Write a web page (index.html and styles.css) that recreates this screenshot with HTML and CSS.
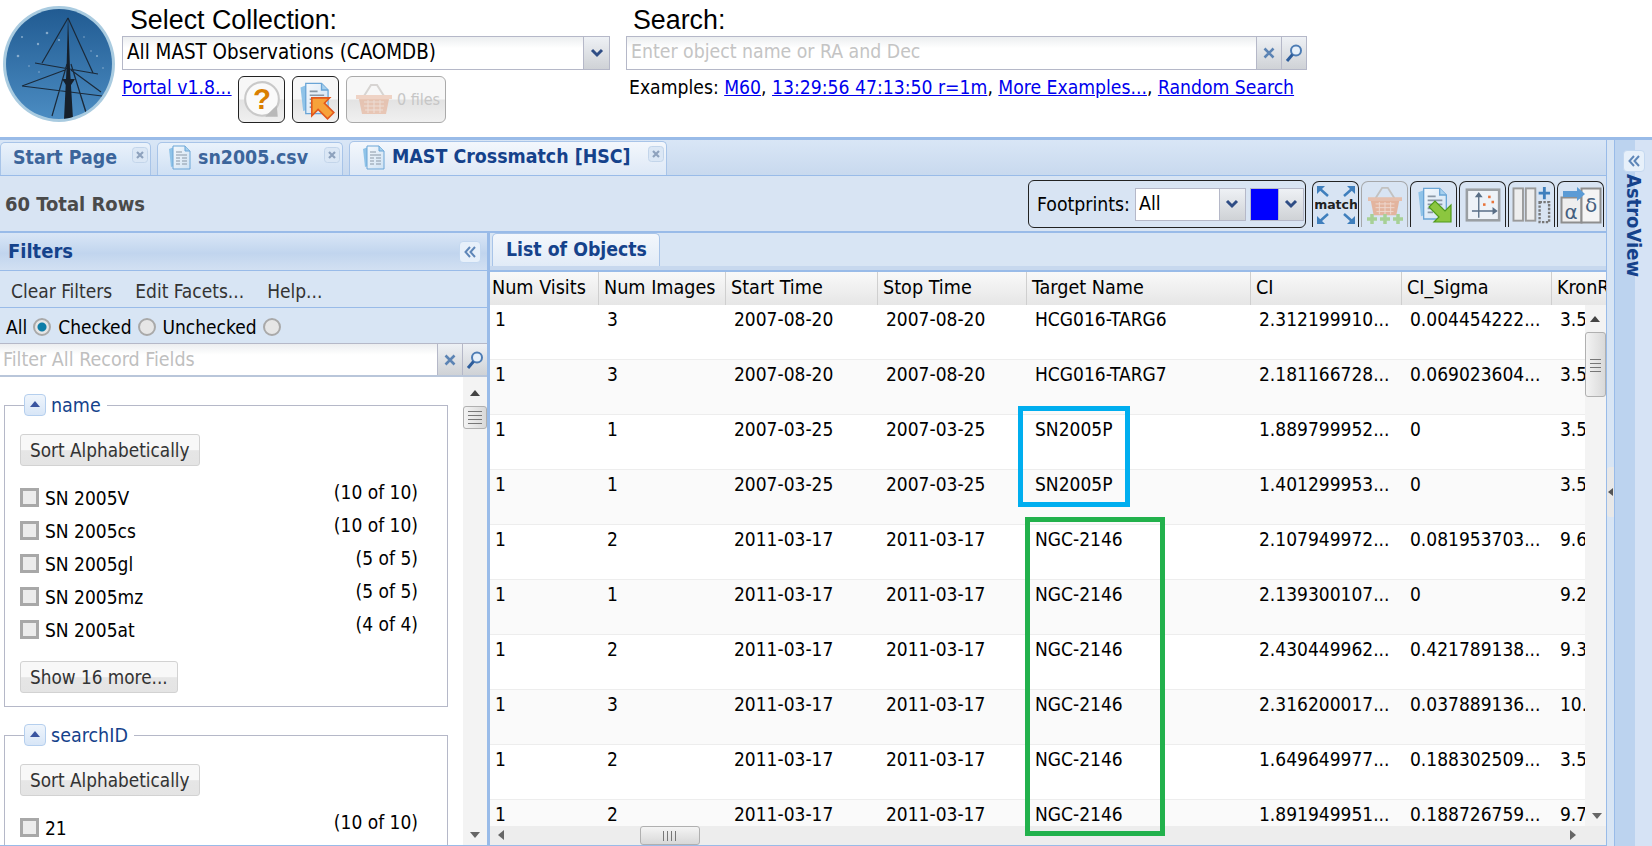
FILE: index.html
```html
<!DOCTYPE html>
<html lang="en">
<head>
<meta charset="utf-8">
<title>MAST Portal</title>
<link rel="stylesheet" href="styles.css">
</head>
<body>
<svg class="defs" width="0" height="0" aria-hidden="true">
  <defs>
    <linearGradient id="doc" x1="0" y1="0" x2="1" y2="1"><stop offset="0" stop-color="#f4f8fc"/><stop offset="1" stop-color="#cfe2f3"/></linearGradient>
    <symbol id="i-doc" viewBox="0 0 24 26">
      <path d="M1 5l5-2v19l-3 1z" fill="#8fc3e8"/>
      <path d="M5 2h12l5 5v18H5z" fill="url(#doc)" stroke="#6aa5d6"/>
      <path d="M17 2v5h5" fill="#a6d0ee" stroke="#6aa5d6"/>
      <path d="M8 8h6M8 11h11M8 14h4M14 14h5M8 17h4M14 17h5M8 20h4M14 20h5" stroke="#8a98a6" stroke-width="1.2"/>
    </symbol>
    <symbol id="i-x" viewBox="0 0 16 16">
      <rect x=".5" y=".5" width="15" height="15" rx="3" fill="#dbe7f5" stroke="#c3d5ea"/>
      <path d="M5 5l6 6M11 5l-6 6" stroke="#8ea2bd" stroke-width="2.2"/>
    </symbol>
    <symbol id="i-chev" viewBox="0 0 14 10"><path d="M2 2l5 5 5-5" fill="none" stroke="#2f4d85" stroke-width="3"/></symbol>
    <symbol id="i-clear" viewBox="0 0 14 14"><path d="M2.500 2.500l9 9M11.500 2.500l-9 9" stroke="#5c84b4" stroke-width="2.600"/></symbol>
    <symbol id="i-find" viewBox="0 0 18 20"><circle cx="11" cy="7.500" r="5" fill="#e6f0fa" stroke="#4d7cb4" stroke-width="2"/><path d="M7.500 11.500L2 18" stroke="#2d5d9b" stroke-width="3"/></symbol>
    <symbol id="i-dbl" viewBox="0 0 14 14"><path d="M7 2L2.500 7 7 12M12 2L7.500 7l4.500 5" fill="none" stroke="#5e86b8" stroke-width="2"/></symbol>
    <symbol id="i-basket" viewBox="0 0 40 36">
      <path d="M10 14L17 3h6l7 11" fill="none" stroke="#bdb9b4" stroke-width="2"/>
      <path d="M2 13h36v4H2z" fill="#e9b79d"/>
      <path d="M5 17h30l-3 15H8z" fill="#e6a98a"/>
      <path d="M10 20h20M10 24h20M11 28h18M14 18v13M20 18v13M26 18v13" stroke="#f4d7c8"/>
    </symbol>
  </defs>
</svg>

<header class="top">
  <svg class="logo" viewBox="0 0 116 120" role="img" aria-label="MAST logo">
    <defs>
      <linearGradient id="sky" x1="0" y1="0" x2="0" y2="1"><stop offset="0" stop-color="#215b92"/><stop offset="1" stop-color="#4b8cc2"/></linearGradient>
      <clipPath id="disc"><ellipse cx="58" cy="60" rx="53" ry="55"/></clipPath>
    </defs>
    <ellipse cx="58" cy="60" rx="56" ry="58" fill="#a9cbe0"/>
    <ellipse cx="58" cy="60" rx="53" ry="55" fill="url(#sky)"/>
    <g fill="#cfe0ef" opacity=".55">
      <circle cx="46" cy="29" r="1.300"/><circle cx="21" cy="33" r="1"/><circle cx="37" cy="40" r="1.200"/><circle cx="17" cy="52" r="1.300"/><circle cx="58" cy="36" r="1"/><circle cx="83" cy="33" r=".8"/><circle cx="96" cy="52" r="1"/><circle cx="28" cy="62" r=".8"/><circle cx="102" cy="64" r=".8"/><circle cx="90" cy="47" r=".8"/><circle cx="38" cy="68" r=".8"/>
    </g>
    <g clip-path="url(#disc)" fill="none" stroke="#1b2a3a">
      <path d="M67 14L41 59M67 14L92 69M66 60L51 112M70 60L86 112M34 59L97 70M21 82L64 66M21 82L101 92M70 66L100 88M73 70L85 108" stroke-width="1.200"/>
      <path d="M67 12l-1.500 53-2.500 50h9l-3-50z" fill="#16202b" stroke="none"/>
      <path d="M61 75h13l-4 6h-5z" fill="#16202b" stroke="none"/>
    </g>
  </svg>
  <div class="collection">
    <div class="big-label">Select Collection:</div>
    <div class="combo">
      <span class="combo-text">All MAST Observations (CAOMDB)</span>
      <span class="trigger"><svg width="14" height="10"><use href="#i-chev"/></svg></span>
    </div>
    <div class="portal-row">
      <a class="link portal-link" href="#">Portal v1.8...</a>
      <button class="tool" aria-label="Help">
        <svg width="40" height="40" viewBox="0 0 38 38"><circle cx="19" cy="18" r="16" fill="#fafafa" stroke="#c9c9c9" stroke-width="2"/><path d="M33 24l1 11H22z" fill="#b9b9b9"/><text x="19" y="28" class="qmark">?</text></svg>
      </button>
      <button class="tool" aria-label="Load">
        <svg width="40" height="42" viewBox="0 0 38 40"><use href="#i-doc" width="30" height="34" x="3" y="1"/><path d="M15 18H32L27 23L36 32L30 38L21 29L15 35Z" fill="#f7a23a" stroke="#e2571c" stroke-width="1.500"/></svg>
      </button>
      <button class="tool basket-tool" aria-label="Basket">
        <svg class="faded" width="40" height="36"><use href="#i-basket"/></svg>
        <span>0 files</span>
      </button>
    </div>
  </div>
  <div class="search">
    <div class="big-label search-label">Search:</div>
    <div class="combo search-box">
      <span class="combo-text placeholder">Enter object name or RA and Dec</span>
      <span class="trigger small"><svg width="14" height="14"><use href="#i-clear"/></svg></span>
      <span class="trigger small"><svg width="18" height="20"><use href="#i-find"/></svg></span>
    </div>
    <div class="examples">Examples: <a class="link" href="#">M60</a>, <a class="link" href="#">13:29:56 47:13:50 r=1m</a>, <a class="link" href="#">More Examples...</a>, <a class="link" href="#">Random Search</a></div>
  </div>
</header>

<div class="workspace">
  <main class="main">
    <nav class="tabs">
      <div class="tab tab-start"><span class="tab-label">Start Page</span><svg class="tab-x" width="16" height="16"><use href="#i-x"/></svg></div>
      <div class="tab tab-file"><svg class="tab-doc" width="24" height="26"><use href="#i-doc"/></svg><span class="tab-label">sn2005.csv</span><svg class="tab-x" width="16" height="16"><use href="#i-x"/></svg></div>
      <div class="tab tab-cross active"><svg class="tab-doc" width="24" height="26"><use href="#i-doc"/></svg><span class="tab-label">MAST Crossmatch [HSC]</span><svg class="tab-x" width="16" height="16"><use href="#i-x"/></svg></div>
    </nav>
    <div class="toolbar">
      <div class="total">60 Total Rows</div>
      <div class="footprints">
        <span>Footprints:</span>
        <div class="mini-combo fp-all"><span class="fp-text">All</span><span class="trigger"><svg width="14" height="10"><use href="#i-chev"/></svg></span></div>
        <div class="mini-combo fp-color"><span class="swatch"></span><span class="trigger"><svg width="14" height="10"><use href="#i-chev"/></svg></span></div>
      </div>
      <div class="actions">
        <button class="act" aria-label="Match"><svg width="42" height="42" viewBox="0 0 42 42"><g fill="none" stroke="#3f7fbd" stroke-width="2.500"><path d="M4 4l9 8M38 4l-9 8M4 38l9-8M38 38l-9-8"/></g><g fill="#3f7fbd"><path d="M2 2h8L2 10zM40 2h-8l8 8zM2 40h8l-8-8zM40 40h-8l8-8z"/></g><text x="21" y="25" class="match">match</text></svg></button>
        <button class="act" aria-label="Add to basket"><svg width="42" height="40" viewBox="0 0 42 40"><use href="#i-basket" width="38" height="34" x="2" y="0"/><path d="M3 34h10M8 29v10M16 34h10M21 29v10M29 34h10M34 29v10" stroke="#9ccc7f" stroke-width="3.500"/></svg></button>
        <button class="act" aria-label="Export"><svg width="42" height="42" viewBox="0 0 42 42"><use href="#i-doc" width="32" height="36" x="4" y="1"/><path d="M38 38H21L26 33L16 23L22 17L32 27L38 21Z" fill="#8cc63f" stroke="#4f9a1a" stroke-width="1.200"/></svg></button>
        <button class="act" aria-label="Chart"><svg width="36" height="34" viewBox="0 0 42 40"><rect x="2" y="2" width="38" height="36" fill="#eef3f8" stroke="#9a9fa3" stroke-width="3"/><path d="M16 35V6M8 27h29M16 6l-3 4h6zM37 27l-4-3v6z" stroke="#5a6f86" stroke-width="1.600" fill="#5a6f86"/><g fill="#e8743b"><rect x="27" y="9" width="3" height="3"/><rect x="21" y="18" width="3" height="3"/><rect x="31" y="15" width="3" height="3"/></g></svg></button>
        <button class="act" aria-label="Columns"><svg width="40" height="38" viewBox="0 0 42 40"><rect x="1.500" y="2.500" width="10" height="34" fill="#eee" stroke="#9a9a9a" stroke-width="2"/><rect x="14.500" y="2.500" width="10" height="34" fill="#eee" stroke="#9a9a9a" stroke-width="2"/><path d="M34 1v13M28 7.500h12" stroke="#3f7fbd" stroke-width="3"/><rect x="29" y="17" width="10" height="21" fill="none" stroke="#777" stroke-width="2.500" stroke-dasharray="2.500 1.500"/></svg></button>
        <button class="act" aria-label="Column names"><svg width="42" height="40" viewBox="0 0 42 40"><rect x="1.500" y="12.500" width="20" height="25" fill="#eee" stroke="#8e8e8e" stroke-width="2"/><rect x="21.500" y="3.500" width="19" height="34" fill="#f4f4f4" stroke="#8e8e8e" stroke-width="2"/><path d="M3 6h14V2l8 7-8 7v-4H3z" fill="#5b9bd5"/><text x="11" y="34" class="greek">α</text><text x="31" y="27" class="greek">δ</text></svg></button>
      </div>
    </div>

    <div class="split">
      <aside class="filters">
        <div class="filters-head">
          <span class="filters-title">Filters</span>
          <span class="dbl-btn"><svg width="14" height="14"><use href="#i-dbl"/></svg></span>
        </div>
        <div class="filters-menu"><span>Clear Filters</span><span>Edit Facets...</span><span>Help...</span></div>
        <div class="filters-radio">
          <span>All</span><i class="radio on"></i>
          <span>Checked</span><i class="radio"></i>
          <span>Unchecked</span><i class="radio"></i>
        </div>
        <div class="filters-input">
          <span class="placeholder">Filter All Record Fields</span>
          <span class="trigger small"><svg width="14" height="14"><use href="#i-clear"/></svg></span>
          <span class="trigger small"><svg width="18" height="20"><use href="#i-find"/></svg></span>
        </div>
        <div class="facet-wrap">
          <div class="facets">
            <fieldset class="facet">
              <legend><i class="toggle"></i><span>name</span></legend>
              <button class="btn">Sort Alphabetically</button>
              <ul class="facet-list">
                <li><i class="check"></i><span class="fname">SN 2005V</span><span class="fcount">(10 of 10)</span></li>
                <li><i class="check"></i><span class="fname">SN 2005cs</span><span class="fcount">(10 of 10)</span></li>
                <li><i class="check"></i><span class="fname">SN 2005gl</span><span class="fcount">(5 of 5)</span></li>
                <li><i class="check"></i><span class="fname">SN 2005mz</span><span class="fcount">(5 of 5)</span></li>
                <li><i class="check"></i><span class="fname">SN 2005at</span><span class="fcount">(4 of 4)</span></li>
              </ul>
              <button class="btn more">Show 16 more...</button>
            </fieldset>
            <fieldset class="facet">
              <legend><i class="toggle"></i><span>searchID</span></legend>
              <button class="btn">Sort Alphabetically</button>
              <ul class="facet-list">
                <li><i class="check"></i><span class="fname">21</span><span class="fcount">(10 of 10)</span></li>
              </ul>
            </fieldset>
          </div>
          <div class="vscroll facet-scroll">
            <i class="arrow up"></i><b class="thumb"></b><i class="arrow down"></i>
          </div>
        </div>
      </aside>

      <section class="results">
        <div class="res-tabs"><div class="res-tab">List of Objects</div></div>
        <div class="grid">
          <div class="row head">
            <span>Num Visits</span><span>Num Images</span><span>Start Time</span><span>Stop Time</span><span>Target Name</span><span>CI</span><span>CI_Sigma</span><span>KronR</span>
          </div>
          <div class="grid-body">
            <div class="rows">
              <div class="row"><span>1</span><span>3</span><span>2007-08-20</span><span>2007-08-20</span><span>HCG016-TARG6</span><span>2.312199910...</span><span>0.004454222...</span><span>3.5</span></div>
              <div class="row"><span>1</span><span>3</span><span>2007-08-20</span><span>2007-08-20</span><span>HCG016-TARG7</span><span>2.181166728...</span><span>0.069023604...</span><span>3.5</span></div>
              <div class="row"><span>1</span><span>1</span><span>2007-03-25</span><span>2007-03-25</span><span>SN2005P</span><span>1.889799952...</span><span>0</span><span>3.5</span></div>
              <div class="row"><span>1</span><span>1</span><span>2007-03-25</span><span>2007-03-25</span><span>SN2005P</span><span>1.401299953...</span><span>0</span><span>3.5</span></div>
              <div class="row"><span>1</span><span>2</span><span>2011-03-17</span><span>2011-03-17</span><span>NGC-2146</span><span>2.107949972...</span><span>0.081953703...</span><span>9.6</span></div>
              <div class="row"><span>1</span><span>1</span><span>2011-03-17</span><span>2011-03-17</span><span>NGC-2146</span><span>2.139300107...</span><span>0</span><span>9.2</span></div>
              <div class="row"><span>1</span><span>2</span><span>2011-03-17</span><span>2011-03-17</span><span>NGC-2146</span><span>2.430449962...</span><span>0.421789138...</span><span>9.3</span></div>
              <div class="row"><span>1</span><span>3</span><span>2011-03-17</span><span>2011-03-17</span><span>NGC-2146</span><span>2.316200017...</span><span>0.037889136...</span><span>10.</span></div>
              <div class="row"><span>1</span><span>2</span><span>2011-03-17</span><span>2011-03-17</span><span>NGC-2146</span><span>1.649649977...</span><span>0.188302509...</span><span>3.5</span></div>
              <div class="row"><span>1</span><span>2</span><span>2011-03-17</span><span>2011-03-17</span><span>NGC-2146</span><span>1.891949951...</span><span>0.188726759...</span><span>9.7</span></div>
            </div>
            <div class="vscroll grid-scroll">
              <i class="arrow up"></i><b class="thumb"></b><i class="arrow down"></i>
            </div>
          </div>
          <div class="hscroll">
            <i class="arrow left"></i><b class="hthumb"></b><i class="arrow right"></i>
          </div>
        </div>
      </section>
    </div>
    <div class="mark mark-blue"></div>
    <div class="mark mark-green"></div>
  </main>
  <div class="side-split"><i class="mini"></i></div>
  <aside class="astro">
    <span class="dbl-btn"><svg width="14" height="14"><use href="#i-dbl"/></svg></span>
    <span class="astro-title">AstroView</span>
  </aside>
</div>
</body>
</html>
```
FILE: styles.css
```css
* { box-sizing: border-box; }
html, body { margin: 0; height: 846px; overflow: hidden; background: #fff; }
body {
  display: flex;
  flex-direction: column;
  font-family: "DejaVu Sans", "Noto Sans", sans-serif;
  font-stretch: condensed;
  font-size: 18px;
  color: #000;
}
.defs { position: absolute; }
button { font: inherit; font-stretch: inherit; margin: 0; padding: 0; }
a.link { color: #0000ee; text-decoration: underline; }

/* header */
.top { height: 137px; flex: none; display: flex; padding: 4px 0 0 1px; }
.logo { width: 116px; height: 120px; flex: none; }
.collection { width: 488px; margin-left: 5px; flex: none; }
.big-label {
  font-family: "Liberation Sans", sans-serif;
  font-stretch: normal;
  font-size: 26.800px;
  line-height: 32px;
  padding-left: 8px;
}
.combo {
  height: 34px;
  display: flex;
  border: 1px solid #b5b8c8;
  background: linear-gradient(#eceef0, #fff 35%);
}
.combo-text { flex: 1; font-size: 20.400px; line-height: 30px; padding-left: 4px; white-space: nowrap; overflow: hidden; }
.trigger {
  width: 26px;
  flex: none;
  display: flex;
  align-items: center;
  justify-content: center;
  background: linear-gradient(#eef1f5, #cfd2d6);
  border-left: 1px solid #b5b8c8;
}
.trigger.small { width: 25px; }
.portal-row { display: flex; align-items: flex-start; margin-top: 6px; }
.portal-link { font-size: 19.300px; line-height: 24px; width: 116px; margin-top: 0; }
.tool {
  width: 47px;
  height: 47px;
  margin-right: 7px;
  display: flex;
  align-items: center;
  justify-content: center;
  border: 1px solid #222;
  border-radius: 6px;
  background: linear-gradient(#f7f7f7 48%, #e3e3e3 52%, #f0f0f0);
}
.basket-tool { width: 100px; gap: 3px; border-color: #aaa; color: #c6c6c6; font-size: 16px; padding-left: 2px; }
.faded { opacity: .55; }
.search { width: 681px; margin-left: 16px; flex: none; }
.search-label { padding-left: 7px; }
.placeholder { color: #bfbfbf; }
.search-box .combo-text { color: #c4c4c4; font-size: 19.300px; }
.examples { font-size: 19.200px; line-height: 24px; margin-top: 6px; padding-left: 3px; white-space: nowrap; }

/* workspace */
.workspace { flex: 1; display: flex; border-top: 3px solid #99bbe8; min-height: 0; }
.main { width: 1606px; flex: none; display: flex; flex-direction: column; position: relative; }
.tabs {
  height: 36px;
  flex: none;
  display: flex;
  align-items: flex-end;
  background: linear-gradient(#d9e6f6, #c8d9ee);
  border-bottom: 1px solid #99bbe8;
}
.tab {
  height: 33px;
  display: flex;
  align-items: center;
  margin-right: 6px;
  padding-bottom: 4px;
  border: 1px solid #a8c4e8;
  border-bottom: 0;
  border-radius: 5px 5px 0 0;
  background: linear-gradient(#eaf2fb, #cfe0f4);
  font-weight: 700;
  font-size: 19.400px;
  color: #3c659b;
  position: relative;
}
.tab.active { background: linear-gradient(#f3f7fc, #dde8f6); color: #15428b; height: 34px; }
.tab-start { width: 151px; padding-left: 12px; }
.tab-file { width: 186px; padding-left: 10px; }
.tab-cross { width: 318px; padding-left: 12px; }
.tab-doc { margin-right: 6px; flex: none; }
.tab-label { white-space: nowrap; }
.tab-x { position: absolute; right: 2px; top: 4px; }
.toolbar {
  height: 55px;
  flex: none;
  display: flex;
  align-items: flex-start;
  background: #d8e4f3;
  padding-left: 5px;
}
.total { font-weight: 700; font-size: 20px; color: #4a4a4a; line-height: 56px; width: 1023px; }
.footprints {
  width: 278px;
  height: 48px;
  margin-top: 4px;
  flex: none;
  display: flex;
  align-items: center;
  padding-left: 8px;
  border: 1px solid #222;
  border-radius: 6px;
  font-size: 19.300px;
}
.mini-combo { display: flex; height: 33px; border: 1px solid #b5b8c8; background: #fff; }
.fp-all { width: 111px; margin-left: 5px; flex: none; }
.fp-text { flex: 1; font-size: 19.500px; line-height: 30px; padding-left: 3px; }
.fp-color { width: 54px; margin-left: 4px; flex: none; }
.swatch { width: 27px; background: #00f; flex: none; }
.fp-color .trigger { flex: 1; }
.actions { display: flex; gap: 2px; margin: 5px 0 0 6px; flex: none; }
.act {
  width: 47px;
  height: 46px;
  display: flex;
  align-items: center;
  justify-content: center;
  background: transparent;
  border: 1px solid #222;
  border-bottom: 0;
  border-radius: 7px 7px 0 0;
}
.act:nth-child(2) { border-color: #999; opacity: .8; }
.qmark { font: 700 28px "Liberation Sans", sans-serif; fill: #d97f00; text-anchor: middle; }
.match { font: 700 12.500px "DejaVu Sans", sans-serif; text-anchor: middle; fill: #222; }
.greek { font: 20px "DejaVu Sans", sans-serif; text-anchor: middle; fill: #44607f; }

/* split */
.split { flex: 1; min-height: 0; display: flex; border-top: 2px solid #99bbe8; border-bottom: 1px solid #99bbe8; }
.filters {
  width: 490px;
  flex: none;
  display: flex;
  flex-direction: column;
  border-right: 3px solid #99bbe8;
  min-height: 0;
  background: #fff;
}
.filters-head {
  height: 38px;
  flex: none;
  display: flex;
  align-items: center;
  justify-content: space-between;
  padding: 0 6px 0 8px;
  background: linear-gradient(#d9e6f6, #c1d5ee 55%, #d2e0f2);
  border-bottom: 1px solid #99bbe8;
}
.filters-title { font-weight: 700; font-size: 20px; color: #15428b; margin-top: -2px; }
.dbl-btn {
  width: 22px;
  height: 22px;
  display: flex;
  align-items: center;
  justify-content: center;
  background: #e7f0fa;
  border: 1px solid #c4d8f0;
  border-radius: 4px;
}
.filters-menu {
  height: 37px;
  flex: none;
  display: flex;
  gap: 23px;
  align-items: center;
  padding: 3px 0 0 11px;
  font-size: 19px;
  color: #333;
  background: #d8e5f4;
  border-bottom: 1px solid #99bbe8;
}
.filters-radio {
  height: 36px;
  flex: none;
  display: flex;
  align-items: center;
  padding: 3px 0 0 6px;
  font-size: 19px;
  background: #d8e5f4;
  border-bottom: 1px solid #b5b8c8;
}
.radio {
  width: 18px;
  height: 18px;
  margin: 0 7px 0 6px;
  border: 2px solid #a9a9a9;
  border-radius: 50%;
  background: #e6e6e6;
  flex: none;
}
.radio.on { background: radial-gradient(circle, #0f7ea8 0 4px, #e6e6e6 5px); }
.filters-input {
  height: 33px;
  flex: none;
  display: flex;
  background: linear-gradient(#eceef0, #fff 35%);
  border-bottom: 2px solid #b9c6da;
  font-size: 19.500px;
}
.filters-input .placeholder { flex: 1; padding-left: 3px; line-height: 32px; white-space: nowrap; }
.facet-wrap { flex: 1; min-height: 0; display: flex; }
.facets { flex: 1; min-width: 0; overflow: hidden; padding: 0 15px 0 4px; }
.facet {
  margin: 17px 0 0;
  padding: 18px 15px 0 15px;
  height: 313px;
  border: 1px solid #b5b8c8;
  min-width: 0;
}
.facet + .facet { margin-top: 17px; height: 200px; }
.facet legend { display: flex; align-items: center; gap: 5px; padding: 0 6px 0 0; margin-left: 4px; height: 22px; color: #15428b; font-size: 19.500px; }
.toggle {
  width: 22px;
  height: 22px;
  border: 1px solid #b5cfee;
  border-radius: 4px;
  background: linear-gradient(#eff5fc, #d8e6f7);
  display: block;
  position: relative;
}
.toggle::after {
  content: "";
  position: absolute;
  left: 5px;
  top: 6px;
  border: 5px solid transparent;
  border-top: 0;
  border-bottom: 6px solid #3a55a0;
}
.btn {
  display: block;
  height: 32px;
  padding: 0 9px;
  background: linear-gradient(#f8f8f8 50%, #e6e6e6 52%, #e4e4e4);
  border: 1px solid #d2d2d2;
  border-radius: 3px;
  color: #333;
  font-size: 18.800px;
}
.facet-list { list-style: none; margin: 15px 0 0; padding: 0; }
.facet-list li { height: 33px; display: flex; align-items: center; }
.check {
  width: 19px;
  height: 19px;
  border: 3px solid #a8a8a8;
  background: #ececec;
  flex: none;
  margin-right: 6px;
}
.fname { flex: 1; font-size: 19px; }
.fcount { font-size: 19px; margin: -12px 14px 0 0; }
.more { margin-top: 15px; }

.vscroll { width: 24px; flex: none; background: #f3f3f3; position: relative; }
.arrow { position: absolute; width: 0; height: 0; border: 5px solid transparent; }
.arrow.up { top: 13px; left: 7px; border-top: 0; border-bottom: 6px solid #444; }
.arrow.down { bottom: 7px; left: 7px; border-bottom: 0; border-top: 6px solid #666; }
.thumb {
  position: absolute;
  left: 0;
  right: 0;
  top: 29px;
  height: 23px;
  background: linear-gradient(90deg, #f3f3f3, #d9d9d9);
  border: 1px solid #b0b0b0;
  border-radius: 3px;
}
.thumb::after {
  content: "";
  position: absolute;
  left: 4px;
  right: 4px;
  top: 4px;
  height: 13px;
  background: repeating-linear-gradient(#777 0 1px, transparent 1px 4px);
}

/* results */
.results { flex: 1; min-width: 0; display: flex; flex-direction: column; }
.res-tabs {
  height: 37px;
  flex: none;
  display: flex;
  align-items: flex-end;
  padding-left: 2px;
  background: #d8e5f4;
  border-bottom: 4px solid #c7d8ee;
}
.res-tab {
  width: 168px;
  height: 33px;
  padding-left: 13px;
  font-weight: 700;
  font-size: 19.300px;
  line-height: 31px;
  color: #15428b;
  background: linear-gradient(#f3f7fc, #e1ebf7);
  border: 1px solid #a8c4e8;
  border-bottom: 0;
  border-radius: 5px 5px 0 0;
}
.grid { flex: 1; min-height: 0; display: flex; flex-direction: column; border-top: 2px solid #99bbe8; }
.row {
  display: grid;
  grid-template-columns: 109px 127px 152px 149px 224px 151px 150px 54px;
  height: 55px;
  flex: none;
  border-bottom: 1px solid #ededed;
  overflow: hidden;
}
.row > span { padding: 2px 0 0 5px; white-space: nowrap; overflow: hidden; font-size: 19px; line-height: 24px; }
.row.head {
  height: 33px;
  background: linear-gradient(#f9f9f9, #e6e6e6);
  border-bottom: 0;
}
.row.head > span { padding: 4px 0 0 5px; border-right: 1px solid #cfcfcf; font-size: 19.600px; }
.row.head > span:first-child { padding-left: 2px; }
.row.head > span:last-child { border-right: 0; }
.grid-body { flex: 1; min-height: 0; display: flex; }
.rows { flex: 1; min-width: 0; overflow: hidden; }
.rows .row { width: 1116px; }
.rows .row > span { padding-left: 8px; }
.rows .row > span:first-child { padding-left: 5px; }
.rows .row:nth-child(even) { background: #fafafa; }
.grid-scroll { width: 21px; }
.grid-scroll .arrow.up { top: 11px; left: 5px; }
.grid-scroll .thumb { top: 27px; height: 65px; }
.grid-scroll .thumb::after { top: 26px; }
.hscroll { height: 19px; flex: none; background: #ededed; position: relative; }
.hthumb {
  position: absolute;
  left: 150px;
  top: 0;
  width: 60px;
  height: 19px;
  background: linear-gradient(#f4f4f4, #d8d8d8);
  border: 1px solid #b0b0b0;
  border-radius: 3px;
}
.hthumb::after {
  content: "";
  position: absolute;
  left: 22px;
  top: 4px;
  width: 13px;
  height: 10px;
  background: repeating-linear-gradient(90deg, #777 0 1px, transparent 1px 4px);
}
.arrow.left { left: 8px; top: 4px; border-left: 0; border-right: 6px solid #666; }
.arrow.right { right: 30px; top: 4px; border-right: 0; border-left: 6px solid #666; }

/* annotation boxes */
.mark { position: absolute; pointer-events: none; }
.mark-blue { left: 1018px; top: 266px; width: 112px; height: 101px; border: 5px solid #00aeef; }
.mark-green { left: 1025px; top: 377px; width: 140px; height: 319px; border: 5px solid #22b14c; }

/* right */
.side-split { width: 9px; flex: none; background: #d8e5f4; border-left: 1px solid #99bbe8; border-right: 1px solid #99bbe8; position: relative; }
.mini {
  position: absolute;
  left: 0;
  top: 327px;
  width: 7px;
  height: 50px;
  background: #e8e8e8;
  border-radius: 3px 0 0 3px;
}
.mini::after {
  content: "";
  position: absolute;
  left: 1px;
  top: 21px;
  border: 4px solid transparent;
  border-left: 0;
  border-right: 5px solid #555;
}
.astro {
  flex: 1;
  display: flex;
  flex-direction: column;
  align-items: center;
  padding-top: 10px;
  background: linear-gradient(90deg, #bcd3ef 0 55%, #d6e3f5 55%);
}
.astro-title {
  writing-mode: vertical-rl;
  font-weight: 700;
  font-size: 20px;
  color: #15428b;
  margin-top: 2px;
}
```
